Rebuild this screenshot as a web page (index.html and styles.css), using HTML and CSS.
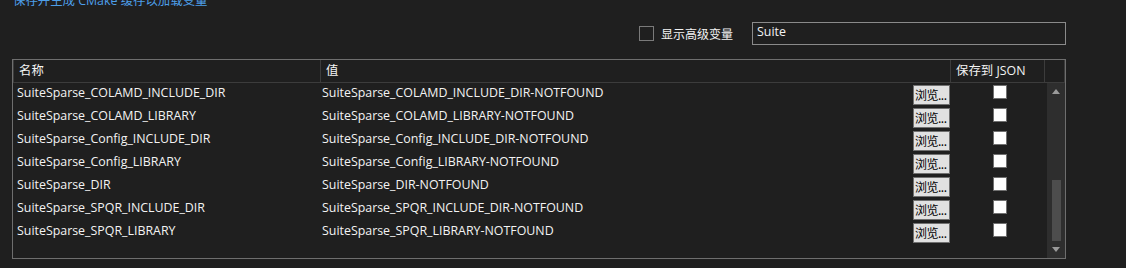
FILE: index.html
```html
<!DOCTYPE html>
<html lang="zh-CN">
<head>
  <meta charset="UTF-8" />
  <title>CMake 设置</title>
  <link rel="stylesheet" href="styles.css">
</head>
<body>

<div class="hint">保存并生成 CMake 缓存以加载变量</div>

<div class="toolbar">
  <label class="advanced">
    <span class="box"></span>
    显示高级变量
  </label>
  <div class="search">Suite</div>
</div>

<div class="grid">
  <div class="grid-head">
    <div class="cell col-name">名称</div>
    <div class="cell col-value">值</div>
    <div class="cell col-json">保存到 JSON</div>
    <div class="cell col-scroll"></div>
  </div>
  <div class="grid-body">
    <div class="rows">
      <div class="row">
        <div class="col-name">SuiteSparse_COLAMD_INCLUDE_DIR</div>
        <div class="col-value"><span>SuiteSparse_COLAMD_INCLUDE_DIR-NOTFOUND</span><button>浏览...</button></div>
        <div class="col-json"><span class="check"></span></div>
      </div>
      <div class="row">
        <div class="col-name">SuiteSparse_COLAMD_LIBRARY</div>
        <div class="col-value"><span>SuiteSparse_COLAMD_LIBRARY-NOTFOUND</span><button>浏览...</button></div>
        <div class="col-json"><span class="check"></span></div>
      </div>
      <div class="row">
        <div class="col-name">SuiteSparse_Config_INCLUDE_DIR</div>
        <div class="col-value"><span>SuiteSparse_Config_INCLUDE_DIR-NOTFOUND</span><button>浏览...</button></div>
        <div class="col-json"><span class="check"></span></div>
      </div>
      <div class="row">
        <div class="col-name">SuiteSparse_Config_LIBRARY</div>
        <div class="col-value"><span>SuiteSparse_Config_LIBRARY-NOTFOUND</span><button>浏览...</button></div>
        <div class="col-json"><span class="check"></span></div>
      </div>
      <div class="row">
        <div class="col-name">SuiteSparse_DIR</div>
        <div class="col-value"><span>SuiteSparse_DIR-NOTFOUND</span><button>浏览...</button></div>
        <div class="col-json"><span class="check"></span></div>
      </div>
      <div class="row">
        <div class="col-name">SuiteSparse_SPQR_INCLUDE_DIR</div>
        <div class="col-value"><span>SuiteSparse_SPQR_INCLUDE_DIR-NOTFOUND</span><button>浏览...</button></div>
        <div class="col-json"><span class="check"></span></div>
      </div>
      <div class="row">
        <div class="col-name">SuiteSparse_SPQR_LIBRARY</div>
        <div class="col-value"><span>SuiteSparse_SPQR_LIBRARY-NOTFOUND</span><button>浏览...</button></div>
        <div class="col-json"><span class="check"></span></div>
      </div>
    </div>
    <div class="scrollbar">
      <span class="arrow up"></span>
      <div class="track"><div class="thumb"></div></div>
      <span class="arrow down"></span>
    </div>
  </div>
</div>

</body>
</html>
```

FILE: styles.css
```css
body {
  margin: 0;
  background: #1f1f1f;
  color: #f3f3f3;
  font-family: "Open Sans", "Noto Sans CJK SC", sans-serif;
  font-size: 12.4px;
}
.hint {
  color: #4d9ee8;
  font-size: 12.4px;
  line-height: 16px;
  margin: -7px 0 0 13px;
}
.toolbar {
  display: flex;
  justify-content: flex-end;
  align-items: center;
  margin: 13px 60px 0 0;
}
.advanced {
  display: flex;
  align-items: center;
  gap: 7px;
  margin-right: 19px;
  font-size: 12px;
}
.advanced .box {
  width: 13px;
  height: 13px;
  border: 1px solid #7a7a7a;
}
.search {
  width: 308px;
  height: 21px;
  border: 1px solid #8a8a8a;
  padding: 0 0 0 4px;
  line-height: 18px;
}
.grid {
  margin: 14px 60px 0 12px;
  height: 198px;
  border: 1px solid #6e6e6e;
}
.grid-head {
  display: flex;
  height: 23px;
}
.grid-head .cell {
  border: 1px solid #3c3c3c;
  border-top: none;
  border-left: none;
  padding-left: 5px;
  line-height: 21px;
  box-sizing: border-box;
}
.grid-head .col-name {
  border-left: 1px solid #3c3c3c;
}
.col-name {
  width: 308px;
  box-sizing: border-box;
}
.col-value {
  width: 630px;
  box-sizing: border-box;
}
.col-json {
  width: 94px;
  box-sizing: border-box;
}
.col-scroll {
  flex: 1;
}
.grid-body {
  display: flex;
  height: 175px;
}
.rows {
  width: 1035px;
}
.row {
  display: flex;
  height: 23px;
  align-items: center;
}
.row .col-name {
  padding-left: 4px;
  margin-top: -4px;
}
.row .col-value {
  display: flex;
  justify-content: space-between;
  align-items: center;
  padding-right: 1px;
}
.row .col-value span {
  margin-top: -4px;
  padding-left: 1px;
}
.row button {
  width: 37px;
  height: 20px;
  margin-top: 0;
  padding: 0 0 0 1px;
  background: #e1e1e1;
  border: 1px solid #707070;
  color: #000;
  font-family: "Noto Sans CJK SC", sans-serif;
  font-size: 12px;
  line-height: 17px;
  text-align: left;
  white-space: nowrap;
  overflow: hidden;
  letter-spacing: -0.5px;
}
.row .col-json {
  display: flex;
  justify-content: center;
  padding-left: 3px;
}
.check {
  width: 12px;
  height: 12px;
  margin-top: -5px;
  background: #fff;
  border: 1px solid #707070;
}
.scrollbar {
  margin-left: 2px;
  width: 18px;
  background: #2e2e2e;
  display: flex;
  flex-direction: column;
  align-items: center;
}
.track {
  flex: 1;
  width: 9px;
  padding: 86px 0 6px;
  box-sizing: border-box;
}
.thumb {
  height: 100%;
  background: #4d4d4d;
}
.arrow {
  width: 0;
  height: 0;
  border-left: 4px solid transparent;
  border-right: 4px solid transparent;
}
.arrow.up {
  margin-top: 6px;
  border-bottom: 5px solid #9a9a9a;
}
.arrow.down {
  margin-bottom: 6px;
  border-top: 5px solid #9a9a9a;
}
```
